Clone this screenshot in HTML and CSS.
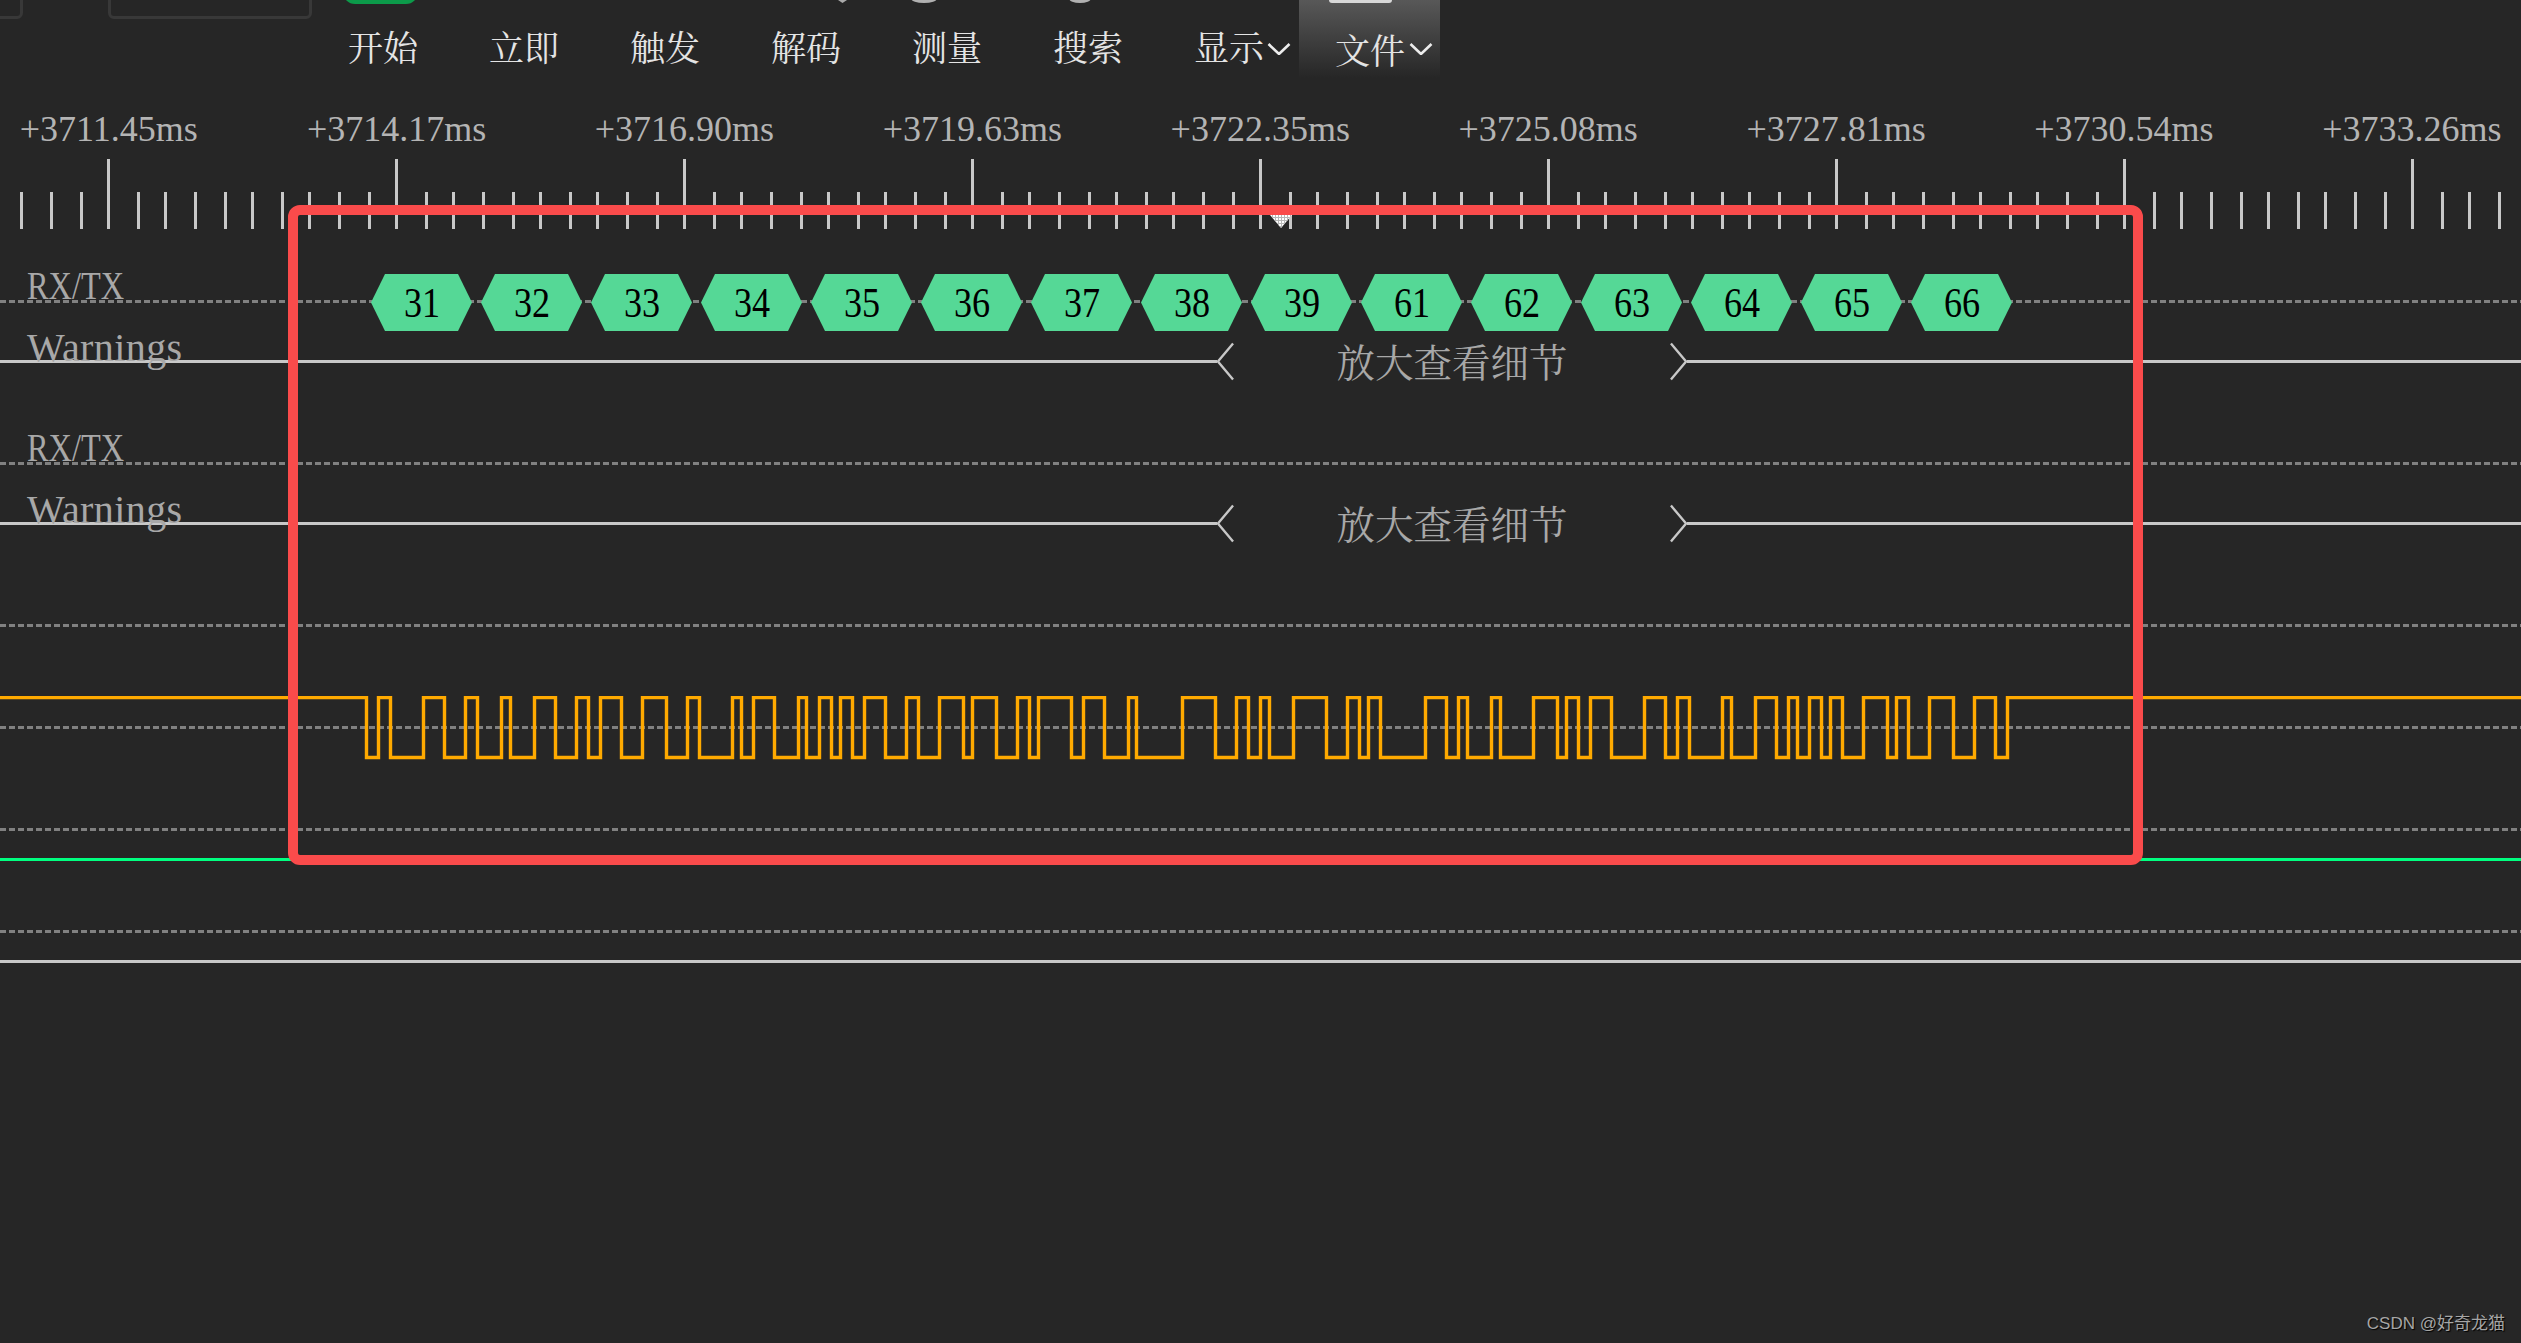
FILE: index.html
```html
<!DOCTYPE html>
<html lang="zh">
<head>
<meta charset="utf-8">
<title>Logic analyzer</title>
<link rel="stylesheet" href="styles.css">
</head>
<body>
<div class="app">
  <header class="topstrip">
    <span class="clip-box clip-box-a"></span>
    <span class="clip-box clip-box-b"></span>
    <span class="clip-pill"></span>
    <span class="clip-tri"></span>
    <span class="clip-bit clip-bit-b"></span>
    <span class="clip-bit clip-bit-c"></span>
  </header>
  <div class="tab-glow"><span class="tab-icon"></span></div>
  <nav class="menu">
    <span class="menu-item">开始</span>
    <span class="menu-item">立即</span>
    <span class="menu-item">触发</span>
    <span class="menu-item">解码</span>
    <span class="menu-item">测量</span>
    <span class="menu-item">搜索</span>
    <span class="menu-item">显示<svg class="caret" viewBox="0 0 24 12"><path d="M1.5 1 12 11 22.5 1"/></svg></span>
    <span class="menu-item menu-item-active">文件<svg class="caret" viewBox="0 0 24 12"><path d="M1.5 1 12 11 22.5 1"/></svg></span>
  </nav>
  <div class="ruler-labels">
    <span class="time">+3711.45ms</span>
    <span class="time">+3714.17ms</span>
    <span class="time">+3716.90ms</span>
    <span class="time">+3719.63ms</span>
    <span class="time">+3722.35ms</span>
    <span class="time">+3725.08ms</span>
    <span class="time">+3727.81ms</span>
    <span class="time">+3730.54ms</span>
    <span class="time">+3733.26ms</span>
  </div>
  <svg class="ticks" viewBox="0 0 2521 70">
    <defs>
      <pattern id="tick-cycle" patternUnits="userSpaceOnUse" x="107" y="0" width="288" height="70">
        <path class="tick-path" d="M1.5 0V70M31.5 33V70M58.5 33V70M88.5 33V70M118.5 33V70M145.5 33V70M175.5 33V70M202.5 33V70M232.5 33V70M262.5 33V70"/>
      </pattern>
    </defs>
    <rect class="tick-fill" width="2521" height="70"/>
  </svg>

  <main class="tracks">
    <section class="track">
      <span class="name name-rx">RX/TX</span>
      <span class="name name-warn">Warnings</span>
      <div class="dash"></div>
      <div class="hexes">
        <span class="hex"><span class="hex-num">31</span></span><span class="hex"><span class="hex-num">32</span></span><span class="hex"><span class="hex-num">33</span></span><span class="hex"><span class="hex-num">34</span></span><span class="hex"><span class="hex-num">35</span></span><span class="hex"><span class="hex-num">36</span></span><span class="hex"><span class="hex-num">37</span></span><span class="hex"><span class="hex-num">38</span></span><span class="hex"><span class="hex-num">39</span></span><span class="hex"><span class="hex-num">61</span></span><span class="hex"><span class="hex-num">62</span></span><span class="hex"><span class="hex-num">63</span></span><span class="hex"><span class="hex-num">64</span></span><span class="hex"><span class="hex-num">65</span></span><span class="hex"><span class="hex-num">66</span></span>
      </div>
      <div class="bus">
        <span class="bus-line bus-line-left"></span>
        <svg class="bus-end" viewBox="0 0 18 40"><path d="M17 1 1 20 17 39"/></svg>
        <span class="bus-text">放大查看细节</span>
        <svg class="bus-end" viewBox="0 0 18 40"><path d="M1 1 17 20 1 39"/></svg>
        <span class="bus-line"></span>
      </div>
    </section>
    <section class="track">
      <span class="name name-rx">RX/TX</span>
      <span class="name name-warn">Warnings</span>
      <div class="dash"></div>
      <div class="bus">
        <span class="bus-line bus-line-left"></span>
        <svg class="bus-end" viewBox="0 0 18 40"><path d="M17 1 1 20 17 39"/></svg>
        <span class="bus-text">放大查看细节</span>
        <svg class="bus-end" viewBox="0 0 18 40"><path d="M1 1 17 20 1 39"/></svg>
        <span class="bus-line"></span>
      </div>
    </section>
    <section class="track track-wave">
      <div class="dash"></div>
      <div class="wave">
        <div class="dash wave-mid"></div>
        <svg class="wave-svg" viewBox="0 0 2521 75">
          <path d="M0 7.6H366.5V67.5H378.5V7.6H390.5V67.5H423.5V7.6H444.5V67.5H465.5V7.6H477.5V67.5H501.5V7.6H510.5V67.5H534.5V7.6H555.5V67.5H576.5V7.6H588.5V67.5H600.5V7.6H621.5V67.5H642.5V7.6H666.5V67.5H687.5V7.6H699.5V67.5H732.5V7.6H741.5V67.5H753.5V7.6H774.5V67.5H798.5V7.6H806.5V67.5H819.5V7.6H831.5V67.5H840.5V7.6H852.5V67.5H864.5V7.6H885.5V67.5H906.5V7.6H918.5V67.5H939.5V7.6H963.5V67.5H972.5V7.6H996.5V67.5H1017.5V7.6H1029.5V67.5H1038.5V7.6H1071.5V67.5H1083.5V7.6H1104.5V67.5H1128.5V7.6H1136.5V67.5H1182.5V7.6H1215.5V67.5H1236.5V7.6H1248.5V67.5H1260.5V7.6H1269.5V67.5H1293.5V7.6H1326.5V67.5H1347.5V7.6H1359.5V67.5H1368.5V7.6H1380.5V67.5H1425.5V7.6H1446.5V67.5H1458.5V7.6H1467.5V67.5H1491.5V7.6H1500.5V67.5H1533.5V7.6H1557.5V67.5H1566.5V7.6H1578.5V67.5H1590.5V7.6H1611.5V67.5H1644.5V7.6H1665.5V67.5H1677.5V7.6H1689.5V67.5H1722.5V7.6H1731.5V67.5H1755.5V7.6H1776.5V67.5H1788.5V7.6H1797.5V67.5H1809.5V7.6H1821.5V67.5H1830.5V7.6H1842.5V67.5H1863.5V7.6H1887.5V67.5H1896.5V7.6H1908.5V67.5H1929.5V7.6H1953.5V67.5H1974.5V7.6H1995.5V67.5H2007.5V7.6H2521"/>
        </svg>
      </div>
    </section>
    <section class="track-plain">
      <div class="dash"></div>
      <div class="level level-green"></div>
    </section>
    <section class="track-plain">
      <div class="dash"></div>
      <div class="level level-white"></div>
    </section>
  </main>

  <div class="cursor"></div>
  <div class="highlight"></div>
  <footer class="watermark">CSDN @好奇龙猫</footer>
</div>
</body>
</html>
```
FILE: styles.css
```css
* { box-sizing: border-box; }
html, body { margin: 0; padding: 0; background: #262626; }
.app {
  position: relative;
  width: 2521px;
  height: 1343px;
  overflow: hidden;
  background: #262626;
  font-family: "Liberation Serif", "Noto Serif CJK SC", "Noto Sans CJK SC", serif;
}

/* clipped remains of the toolbar above */
.topstrip { position: relative; height: 28px; }
.clip-box {
  position: absolute;
  top: -10px;
  height: 29px;
  border: 3px solid #383838;
  border-radius: 6px;
}
.clip-box-a { left: -20px; width: 43px; }
.clip-box-b { left: 108px; width: 204px; }
.clip-pill {
  position: absolute;
  left: 343px;
  top: -20px;
  width: 75px;
  height: 24px;
  border-radius: 12px;
  background: #0c9a4a;
}
.clip-tri {
  position: absolute;
  left: 838px;
  top: 0;
  width: 9px;
  height: 3px;
  background: #aaaaaa;
  clip-path: polygon(0 0, 100% 0, 50% 100%);
}
.clip-bit {
  position: absolute;
  top: -6px;
  height: 9px;
  border-radius: 50%;
  background: #b0b0b0;
}
.clip-bit-b { left: 911px; width: 26px; }
.clip-bit-c { left: 1069px; width: 22px; }
.tab-glow {
  position: absolute;
  left: 1299px;
  top: 0;
  width: 141px;
  height: 78px;
  background: linear-gradient(to bottom, #585858, #262626);
}
.tab-icon {
  display: block;
  width: 63px;
  height: 3px;
  margin-left: 30px;
  border-radius: 0 0 3px 3px;
  background: #d8d8d8;
}

.menu {
  position: relative;
  display: flex;
  height: 82px;
  padding-top: 2px;
  padding-left: 348px;
}
.menu-item {
  display: flex;
  align-items: flex-start;
  width: 141px;
  font-size: 35px;
  line-height: 40px;
  color: #e4e4e4;
  white-space: nowrap;
}
.menu-item-active { padding-top: 3px; }
.caret {
  width: 24px;
  height: 12px;
  margin: 13px 0 0 3px;
  flex: none;
}
.menu-item-active .caret { margin-left: 4px; margin-top: 10px; }
.caret path { fill: none; stroke: #ececec; stroke-width: 2.6; }

.ruler-labels {
  display: flex;
  height: 42px;
  margin-left: -35.25px;
  width: 2600px;
}
.time {
  flex: none;
  width: 287.9px;
  text-align: center;
  font-size: 36px;
  line-height: 36px;
  color: #b4b4b4;
  margin-top: 1px;
}
.ticks {
  display: block;
  width: 2521px;
  height: 70px;
  margin-top: 7px;
}
.tick-fill { fill: url(#tick-cycle); }
.tick-path { fill: none; stroke: #c8c8c8; stroke-width: 3; shape-rendering: crispEdges; }

/* tracks */
.tracks { display: flex; flex-direction: column; margin-top: 11px; }
.track { position: relative; height: 162px; padding-top: 60px; }
.track-wave { height: 264px; }
.track-plain { height: 102px; }
.dash {
  height: 3px;
  background: repeating-linear-gradient(to right, #808080 0 6px, transparent 6px 9px);
}
.name {
  position: absolute;
  left: 27px;
  z-index: 2;
  line-height: 44px;
  color: #a8a8a8;
  white-space: nowrap;
  font-size: 40px;
  transform-origin: 0 50%;
}
.name-rx { top: 24px; transform: scaleX(.81); }
.name-warn { top: 86px; letter-spacing: .4px; }

.hexes {
  position: absolute;
  left: 371px;
  top: 34px;
  display: flex;
  gap: 9px;
}
.hex {
  width: 101px;
  height: 57px;
  display: flex;
  align-items: center;
  justify-content: center;
  background: #55d896;
  color: #000;
  clip-path: polygon(14px 0, calc(100% - 14px) 0, 100% 50%, calc(100% - 14px) 100%, 14px 100%, 0 50%);
}
.hex-num {
  display: block;
  font-size: 42px;
  line-height: 46px;
  transform: scaleX(.86);
}
.bus {
  display: flex;
  align-items: center;
  height: 39px;
  margin-top: 39px;
}
.bus-line { flex: 1; height: 3px; background: #c8c8c8; }
.bus-line-left { flex: none; width: 1217px; }
.bus-end { flex: none; width: 17px; height: 39px; }
.bus-end path { fill: none; stroke: #c8c8c8; stroke-width: 2.5; }
.bus-text {
  flex: none;
  width: 436px;
  padding-top: 5px;
  text-align: center;
  font-size: 38.5px;
  line-height: 39px;
  color: #a8a8a8;
}

.wave { position: relative; height: 75px; margin-top: 63px; }
.wave-mid { position: absolute; left: 0; right: 0; top: 36px; }
.wave-svg { position: absolute; left: 0; top: 0; width: 2521px; height: 75px; }
.wave-svg path { fill: none; stroke: #ffaa00; stroke-width: 3.4; }

.level { height: 3px; margin-top: 27px; }
.level-green { background: #00ff80; }
.level-white { background: #c8c8c8; }

/* overlays */
.cursor {
  position: absolute;
  left: 1270px;
  top: 215px;
  width: 22px;
  height: 13px;
  clip-path: polygon(0 0, 100% 0, 50% 100%);
  background:
    repeating-linear-gradient(to right, transparent 0 2px, #b8b8b8 2px 3px),
    repeating-linear-gradient(to bottom, transparent 0 2px, #b8b8b8 2px 3px),
    #fff;
}
.highlight {
  position: absolute;
  left: 288px;
  top: 205px;
  width: 1855px;
  height: 660px;
  border: 10px solid #fa4b4b;
  border-radius: 12px;
}
.watermark {
  position: absolute;
  right: 16px;
  bottom: 8px;
  font-family: "Liberation Sans", "Noto Sans CJK SC", sans-serif;
  font-size: 17px;
  line-height: 22px;
  color: #a6a6a6;
  text-shadow: 1px 1px 1px #000;
  white-space: nowrap;
}
```
